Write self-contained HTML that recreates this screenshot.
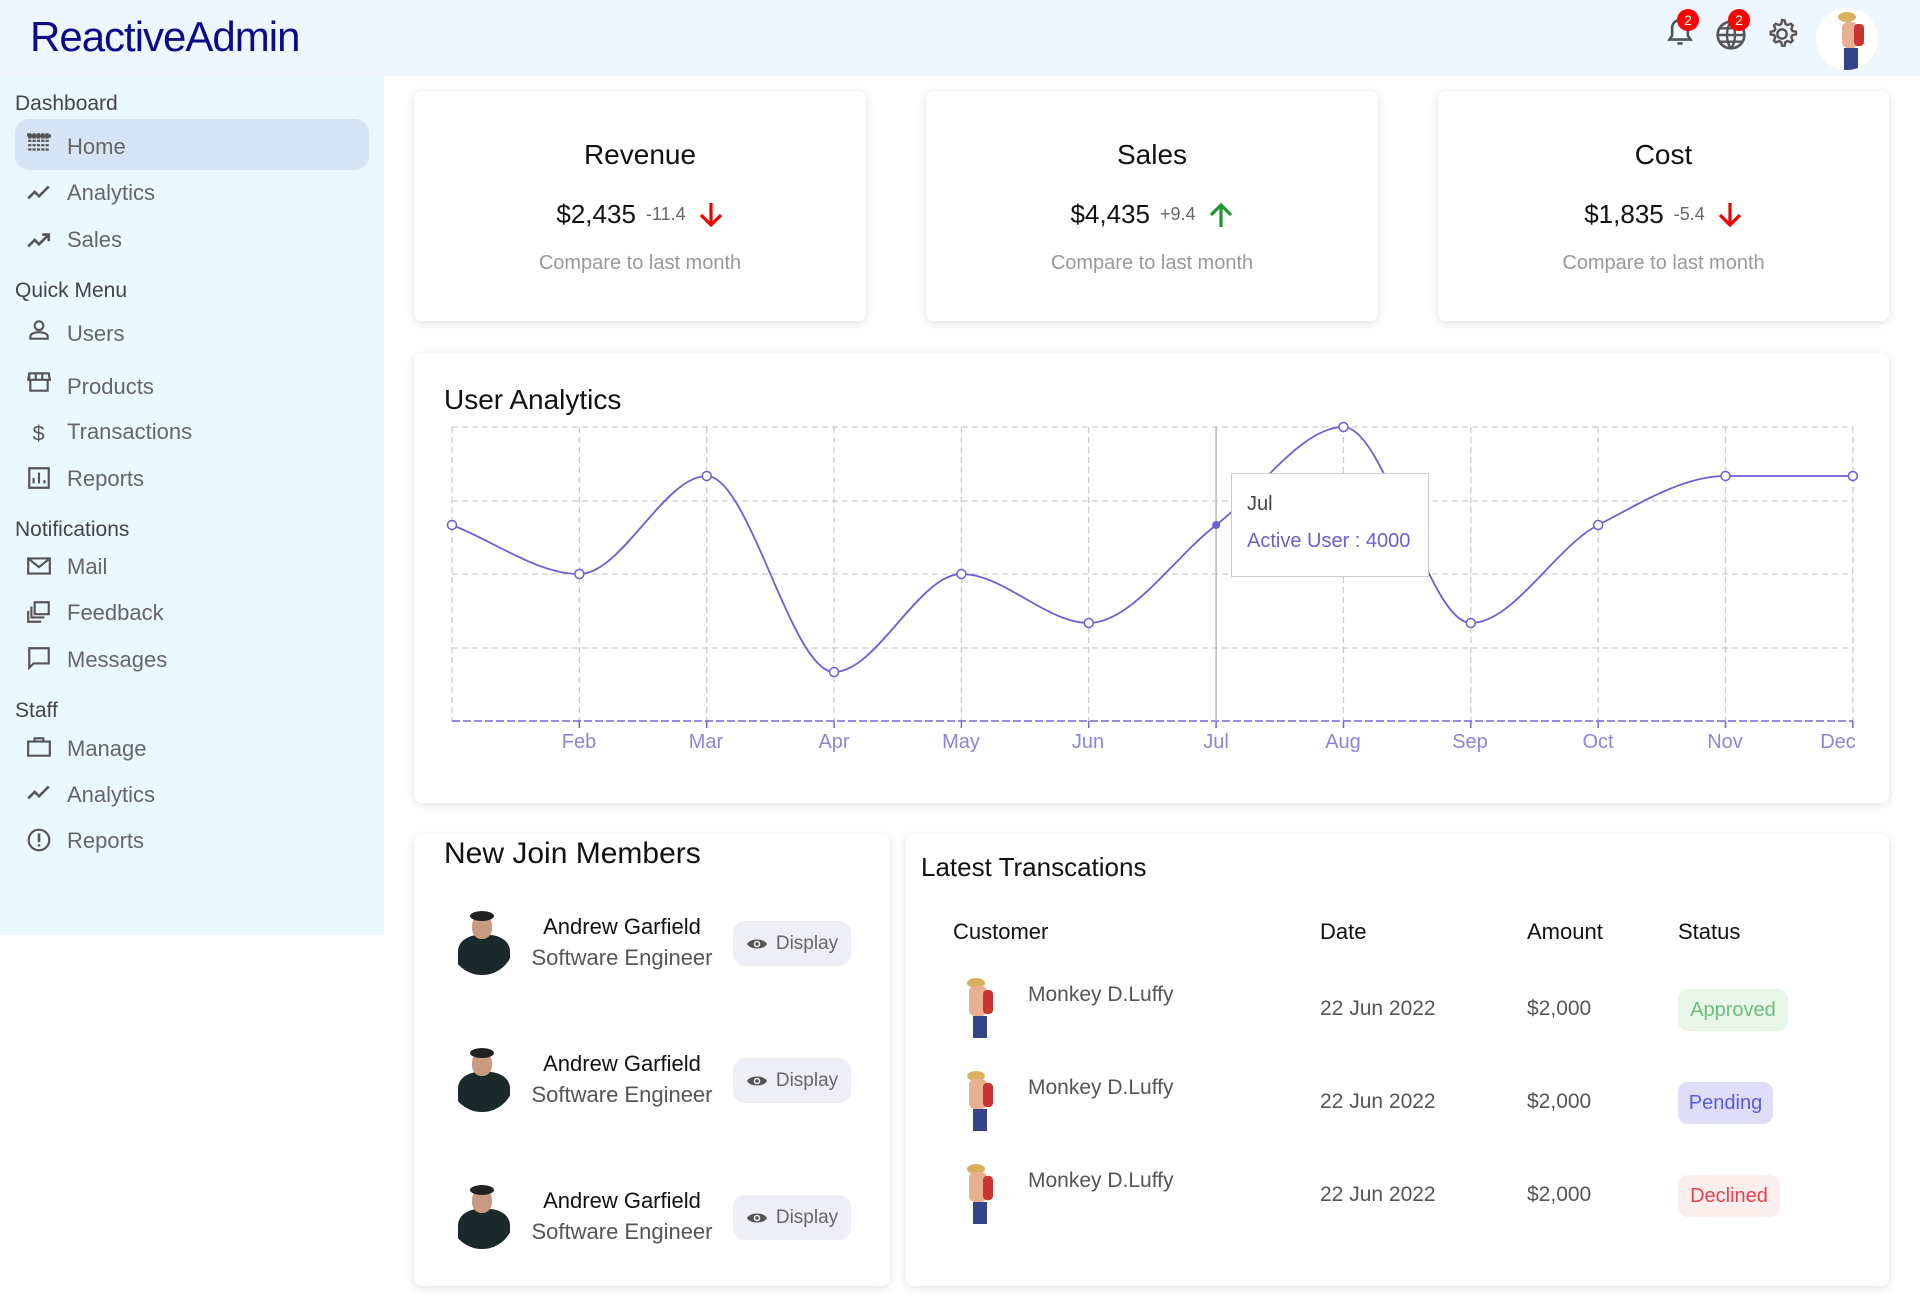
<!DOCTYPE html>
<html><head><meta charset="utf-8"><style>
*{margin:0;padding:0;box-sizing:border-box}
body{width:1920px;height:1315px;background:#fff;font-family:"Liberation Sans",sans-serif;position:relative;overflow:hidden;color:#222}
.a{position:absolute}
.hdr{left:0;top:0;width:1920px;height:76px;background:#eef6ff}
.logo{left:30px;top:13px;font-size:42px;color:#0a0a8a;letter-spacing:-1px}
.side{left:0;top:76px;width:384px;height:859px;background:#eaf8ff}
.sh{left:15px;font-size:21px;color:#444;transform:translateY(-50%)}
.si{left:67px;font-size:22px;color:#666;transform:translateY(-50%)}
.ic{left:26px;width:26px;height:26px;transform:translateY(-50%)}
.card{background:#fff;box-shadow:0 2px 10px rgba(0,0,0,.12);border-radius:8px}
.ct{width:100%;text-align:center;font-size:28px;color:#111}
.cv{width:100%;text-align:center;font-size:26px;color:#111;display:flex;justify-content:center;align-items:center}
.cv small{font-size:18px;color:#666;margin:0 12px 0 10px}
.cc{width:100%;text-align:center;font-size:20px;color:#999}
.ax{font-size:20px;color:#8a86dc;transform:translateX(-50%)}
.nm{font-size:22px;color:#111;text-align:center;width:200px}
.jb{font-size:22px;color:#555;text-align:center;width:200px}
.btn{width:118px;height:45px;background:#eeeef7;border-radius:12px;font-size:19px;color:#666;display:flex;align-items:center;justify-content:center;gap:8px}
.th{font-size:22px;color:#111}
.td{font-size:21px;color:#555}
.bd{height:42px;border-radius:10px;font-size:20px;display:flex;align-items:center;justify-content:center}
</style></head><body>
<div class="a hdr"></div>
<div class="a logo">ReactiveAdmin</div>
<svg class="a" style="left:1664px;top:16px" width="32" height="34" viewBox="0 0 24 26"><path d="M12 3a6 6 0 0 0-6 6v6l-2 3h16l-2-3V9a6 6 0 0 0-6-6z" fill="none" stroke="#555" stroke-width="2"/><path d="M10 21h4" stroke="#555" stroke-width="2"/></svg>
<div class="a" style="left:1677px;top:9px;width:22px;height:22px;border-radius:50%;background:#f00;color:#fff;font-size:14px;text-align:center;line-height:22px">2</div>
<svg class="a" style="left:1715px;top:19px" width="32" height="32" viewBox="0 0 24 24"><circle cx="12" cy="12" r="10" fill="none" stroke="#555" stroke-width="2"/><path d="M2 12h20M12 2c-4 5-4 15 0 20M12 2c4 5 4 15 0 20M4 7h16M4 17h16" fill="none" stroke="#555" stroke-width="1.8"/></svg>
<div class="a" style="left:1728px;top:9px;width:22px;height:22px;border-radius:50%;background:#f00;color:#fff;font-size:14px;text-align:center;line-height:22px">2</div>
<svg class="a" style="left:1766px;top:18px" width="32" height="32" viewBox="0 0 24 24"><path d="M12 1.5l2 .3.5 2.6 1.6.9 2.5-1 1.4 1.4-1 2.5.9 1.6 2.6.5v2l-2.6.5-.9 1.6 1 2.5-1.4 1.4-2.5-1-1.6.9-.5 2.6h-2l-.5-2.6-1.6-.9-2.5 1-1.4-1.4 1-2.5-.9-1.6-2.6-.5v-2l2.6-.5.9-1.6-1-2.5 1.4-1.4 2.5 1 1.6-.9.5-2.6z" fill="none" stroke="#555" stroke-width="1.8"/><circle cx="12" cy="12" r="3.5" fill="none" stroke="#555" stroke-width="1.8"/></svg>
<div class="a" style="left:1816px;top:8px;width:62px;height:62px;border-radius:50%;background:#fff;overflow:hidden">
<div class="a" style="left:22px;top:4px;width:18px;height:10px;background:#d8b060;border-radius:50%"></div>
<div class="a" style="left:26px;top:14px;width:16px;height:26px;background:#e8b090;border-radius:6px"></div>
<div class="a" style="left:38px;top:16px;width:10px;height:22px;background:#c33;border-radius:4px"></div>
<div class="a" style="left:28px;top:40px;width:14px;height:22px;background:#334488"></div>
</div>

<div class="a side"></div>
<div class="a" style="left:15px;top:119px;width:354px;height:51px;background:#d5e5f5;border-radius:14px"></div>
<div class="a sh" style="top:104px">Dashboard</div>
<div class="a sh" style="top:291px">Quick Menu</div>
<div class="a sh" style="top:530px">Notifications</div>
<div class="a sh" style="top:711px">Staff</div>
<div class="a si" style="top:147px">Home</div>
<div class="a si" style="top:193px">Analytics</div>
<div class="a si" style="top:240px">Sales</div>
<div class="a si" style="top:334px">Users</div>
<div class="a si" style="top:387px">Products</div>
<div class="a si" style="top:432px">Transactions</div>
<div class="a si" style="top:479px">Reports</div>
<div class="a si" style="top:567px">Mail</div>
<div class="a si" style="top:613px">Feedback</div>
<div class="a si" style="top:660px">Messages</div>
<div class="a si" style="top:749px">Manage</div>
<div class="a si" style="top:795px">Analytics</div>
<div class="a si" style="top:841px">Reports</div>
<svg class="a ic" style="top:143px" viewBox="0 0 24 24"><path d="M2 4h20v3H2zM2 10h20M2 14h20M2 18h20" stroke="#555" stroke-width="2" stroke-dasharray="3 1" fill="#555"/></svg>
<svg class="a ic" style="top:193px" viewBox="0 0 24 24"><path d="M2 17l6-6 4 4 9-9" fill="none" stroke="#555" stroke-width="2.4"/></svg>
<svg class="a ic" style="top:240px" viewBox="0 0 24 24"><path d="M2 18l6-6 4 4 8-8M15 7h6v6" fill="none" stroke="#555" stroke-width="2.4"/></svg>
<svg class="a ic" style="top:330px" viewBox="0 0 24 24"><circle cx="12" cy="8" r="4" fill="none" stroke="#555" stroke-width="2"/><path d="M4 20v-2c0-3 5-4 8-4s8 1 8 4v2z" fill="none" stroke="#555" stroke-width="2"/></svg>
<svg class="a ic" style="top:382px" viewBox="0 0 24 24"><path d="M3 4h18l1 6H2zM4 10v10h16V10M3 4v6M9 4v6M15 4v6" fill="none" stroke="#555" stroke-width="2"/></svg>
<svg class="a ic" style="top:432px" viewBox="0 0 24 24"><text x="6" y="20" font-size="20" fill="#555" font-family="Liberation Sans">$</text></svg>
<svg class="a ic" style="top:478px" viewBox="0 0 24 24"><path d="M3 3h18v18H3zM7 17v-5M12 17V7M17 17v-3" fill="none" stroke="#555" stroke-width="2"/></svg>
<svg class="a ic" style="top:566px" viewBox="0 0 24 24"><path d="M2 5h20v14H2zM2 5l10 8 10-8" fill="none" stroke="#555" stroke-width="2"/></svg>
<svg class="a ic" style="top:612px" viewBox="0 0 24 24"><path d="M8 3h13v11H8zM5 7v10h12M2 11v10h12" fill="none" stroke="#555" stroke-width="2"/></svg>
<svg class="a ic" style="top:658px" viewBox="0 0 24 24"><path d="M3 3h18v14H7l-4 4z" fill="none" stroke="#555" stroke-width="2"/></svg>
<svg class="a ic" style="top:747px" viewBox="0 0 24 24"><path d="M2 7h20v13H2zM8 7V4h8v3" fill="none" stroke="#555" stroke-width="2"/></svg>
<svg class="a ic" style="top:793px" viewBox="0 0 24 24"><path d="M2 17l6-6 4 4 9-9" fill="none" stroke="#555" stroke-width="2.4"/></svg>
<svg class="a ic" style="top:840px" viewBox="0 0 24 24"><circle cx="12" cy="12" r="9.5" fill="none" stroke="#555" stroke-width="2"/><path d="M12 6v8M12 16v2" stroke="#555" stroke-width="2.4"/></svg>

<div class="a card" style="left:414px;top:91px;width:452px;height:230px">
<div class="a ct" style="top:48px">Revenue</div>
<div class="a cv" style="top:108px">$2,435<small>-11.4</small><svg width="26" height="28" viewBox="0 0 26 28"><path d="M13 2v22M3 14l10 10 10-10" fill="none" stroke="#e00" stroke-width="3.2"/></svg></div>
<div class="a cc" style="top:161px">Compare to last month</div></div>
<div class="a card" style="left:926px;top:91px;width:452px;height:230px">
<div class="a ct" style="top:48px">Sales</div>
<div class="a cv" style="top:108px">$4,435<small>+9.4</small><svg width="26" height="28" viewBox="0 0 26 28"><path d="M13 26V4M3 14L13 4l10 10" fill="none" stroke="#1a9a2a" stroke-width="3.2"/></svg></div>
<div class="a cc" style="top:161px">Compare to last month</div></div>
<div class="a card" style="left:1438px;top:91px;width:451px;height:230px">
<div class="a ct" style="top:48px">Cost</div>
<div class="a cv" style="top:108px">$1,835<small>-5.4</small><svg width="26" height="28" viewBox="0 0 26 28"><path d="M13 2v22M3 14l10 10 10-10" fill="none" stroke="#e00" stroke-width="3.2"/></svg></div>
<div class="a cc" style="top:161px">Compare to last month</div></div>

<div class="a card" style="left:414px;top:353px;width:1475px;height:450px"></div>
<div class="a" style="left:444px;top:384px;font-size:28px;color:#111">User Analytics</div>
<svg class="a" style="left:0;top:0" width="1920" height="800">
<g stroke="#ccc" stroke-dasharray="6 4" stroke-width="1.3" fill="none">
<path d="M452 427H1853M452 501H1853M452 574H1853M452 648H1853"/>
<path d="M452 427V721M579.35 427V721M706.7 427V721M834.05 427V721M961.4 427V721M1088.75 427V721M1343.45 427V721M1470.8 427V721M1598.15 427V721M1725.5 427V721M1852.85 427V721"/>
</g>
<path d="M452 721H1853" stroke="#7068d8" stroke-width="1.5" stroke-dasharray="8 3"/>
<path d="M579.35 721v7M706.7 721v7M834.05 721v7M961.4 721v7M1088.75 721v7M1216.1 721v7M1343.45 721v7M1470.8 721v7M1598.15 721v7M1725.5 721v7M1852.85 721v7" stroke="#7068d8" stroke-width="1.5"/>
<path d="M1216.1 427V721" stroke="#bbb" stroke-width="1.5"/>
<path d="M452 525C494.45 541.3 536.9 574 579.35 574C621.8 574 664.25 476 706.7 476C749.15 476 791.6 672 834.05 672C876.5 672 918.95 574 961.4 574C1003.850 574 1046.3 623 1088.75 623C1131.2 623 1173.65 557.7 1216.1 525C1258.55 492.3 1301 427 1343.45 427C1385.9 427 1428.35 623 1470.8 623C1513.25 623 1555.7 546.8 1598.15 525C1640.6 503.2 1683.05 476 1725.5 476L1852.85 476" fill="none" stroke="#6a5fd6" stroke-width="1.8"/>
<g fill="#fff" stroke="#6a5fd6" stroke-width="1.5">
<circle cx="452" cy="525" r="4.5"/><circle cx="579.35" cy="574" r="4.5"/><circle cx="706.7" cy="476" r="4.5"/><circle cx="834.05" cy="672" r="4.5"/><circle cx="961.4" cy="574" r="4.5"/><circle cx="1088.75" cy="623" r="4.5"/><circle cx="1343.45" cy="427" r="4.5"/><circle cx="1470.8" cy="623" r="4.5"/><circle cx="1598.15" cy="525" r="4.5"/><circle cx="1725.5" cy="476" r="4.5"/><circle cx="1852.85" cy="476" r="4.5"/>
</g>
<circle cx="1216.1" cy="525" r="4" fill="#6a5fd6"/>
</svg>
<div class="a" style="left:1231px;top:473px;width:198px;height:104px;background:#fff;border:1px solid #ccc"></div>
<div class="a" style="left:1247px;top:493px;font-size:20px;color:#444">Jul</div>
<div class="a" style="left:1247px;top:530px;font-size:20px;color:#6a5fd6">Active User : 4000</div>
<div class="a ax" style="left:579px;top:731px">Feb</div>
<div class="a ax" style="left:706px;top:731px">Mar</div>
<div class="a ax" style="left:834px;top:731px">Apr</div>
<div class="a ax" style="left:961px;top:731px">May</div>
<div class="a ax" style="left:1088px;top:731px">Jun</div>
<div class="a ax" style="left:1216px;top:731px">Jul</div>
<div class="a ax" style="left:1343px;top:731px">Aug</div>
<div class="a ax" style="left:1470px;top:731px">Sep</div>
<div class="a ax" style="left:1598px;top:731px">Oct</div>
<div class="a ax" style="left:1725px;top:731px">Nov</div>
<div class="a ax" style="left:1838px;top:731px">Dec</div>

<div class="a card" style="left:414px;top:834px;width:476px;height:452px"></div>
<div class="a" style="left:444px;top:837px;font-size:30px;color:#111">New Join Members</div>
<div class="a" style="left:450px;top:911px;width:64px;height:64px;border-radius:50%;overflow:hidden;background:#fff"><div class="a" style="left:8px;top:24px;width:52px;height:40px;background:#1a2a2a;border-radius:40% 40% 0 0"></div><div class="a" style="left:22px;top:4px;width:20px;height:24px;background:#c89a80;border-radius:45%"></div><div class="a" style="left:20px;top:0;width:24px;height:10px;background:#222;border-radius:50%"></div></div>
<div class="a nm" style="left:522px;top:914px">Andrew Garfield</div>
<div class="a jb" style="left:522px;top:945px">Software Engineer</div>
<div class="a btn" style="left:733px;top:921px"><svg width="22" height="14" viewBox="0 0 22 14"><path d="M1 7C4 1 18 1 21 7C18 13 4 13 1 7z" fill="#555"/><circle cx="11" cy="7" r="3.3" fill="#eee"/><circle cx="11" cy="7" r="1.8" fill="#555"/></svg>Display</div>

<div class="a" style="left:450px;top:1048px;width:64px;height:64px;border-radius:50%;overflow:hidden;background:#fff"><div class="a" style="left:8px;top:24px;width:52px;height:40px;background:#1a2a2a;border-radius:40% 40% 0 0"></div><div class="a" style="left:22px;top:4px;width:20px;height:24px;background:#c89a80;border-radius:45%"></div><div class="a" style="left:20px;top:0;width:24px;height:10px;background:#222;border-radius:50%"></div></div>
<div class="a nm" style="left:522px;top:1051px">Andrew Garfield</div>
<div class="a jb" style="left:522px;top:1082px">Software Engineer</div>
<div class="a btn" style="left:733px;top:1058px"><svg width="22" height="14" viewBox="0 0 22 14"><path d="M1 7C4 1 18 1 21 7C18 13 4 13 1 7z" fill="#555"/><circle cx="11" cy="7" r="3.3" fill="#eee"/><circle cx="11" cy="7" r="1.8" fill="#555"/></svg>Display</div>

<div class="a" style="left:450px;top:1185px;width:64px;height:64px;border-radius:50%;overflow:hidden;background:#fff"><div class="a" style="left:8px;top:24px;width:52px;height:40px;background:#1a2a2a;border-radius:40% 40% 0 0"></div><div class="a" style="left:22px;top:4px;width:20px;height:24px;background:#c89a80;border-radius:45%"></div><div class="a" style="left:20px;top:0;width:24px;height:10px;background:#222;border-radius:50%"></div></div>
<div class="a nm" style="left:522px;top:1188px">Andrew Garfield</div>
<div class="a jb" style="left:522px;top:1219px">Software Engineer</div>
<div class="a btn" style="left:733px;top:1195px"><svg width="22" height="14" viewBox="0 0 22 14"><path d="M1 7C4 1 18 1 21 7C18 13 4 13 1 7z" fill="#555"/><circle cx="11" cy="7" r="3.3" fill="#eee"/><circle cx="11" cy="7" r="1.8" fill="#555"/></svg>Display</div>

<div class="a card" style="left:906px;top:834px;width:983px;height:452px"></div>
<div class="a" style="left:921px;top:852px;font-size:26px;color:#111">Latest Transcations</div>
<div class="a th" style="left:953px;top:919px">Customer</div>
<div class="a th" style="left:1320px;top:919px">Date</div>
<div class="a th" style="left:1527px;top:919px">Amount</div>
<div class="a th" style="left:1678px;top:919px">Status</div>

<div class="a" style="left:953px;top:978px;width:62px;height:62px"><div class="a" style="left:14px;top:0;width:18px;height:10px;background:#d8b060;border-radius:50%"></div><div class="a" style="left:16px;top:8px;width:18px;height:30px;background:#e8b090;border-radius:6px"></div><div class="a" style="left:30px;top:12px;width:10px;height:24px;background:#c33;border-radius:4px"></div><div class="a" style="left:20px;top:38px;width:14px;height:22px;background:#334488"></div></div>
<div class="a td" style="left:1028px;top:983px">Monkey D.Luffy</div>
<div class="a td" style="left:1320px;top:997px">22 Jun 2022</div>
<div class="a td" style="left:1527px;top:997px">$2,000</div>
<div class="a bd" style="left:1678px;top:989px;width:110px;background:#e8f6ea;color:#6cbf7a">Approved</div>

<div class="a" style="left:953px;top:1071px;width:62px;height:62px"><div class="a" style="left:14px;top:0;width:18px;height:10px;background:#d8b060;border-radius:50%"></div><div class="a" style="left:16px;top:8px;width:18px;height:30px;background:#e8b090;border-radius:6px"></div><div class="a" style="left:30px;top:12px;width:10px;height:24px;background:#c33;border-radius:4px"></div><div class="a" style="left:20px;top:38px;width:14px;height:22px;background:#334488"></div></div>
<div class="a td" style="left:1028px;top:1076px">Monkey D.Luffy</div>
<div class="a td" style="left:1320px;top:1090px">22 Jun 2022</div>
<div class="a td" style="left:1527px;top:1090px">$2,000</div>
<div class="a bd" style="left:1678px;top:1082px;width:95px;background:#dedef8;color:#5a5ae0">Pending</div>

<div class="a" style="left:953px;top:1164px;width:62px;height:62px"><div class="a" style="left:14px;top:0;width:18px;height:10px;background:#d8b060;border-radius:50%"></div><div class="a" style="left:16px;top:8px;width:18px;height:30px;background:#e8b090;border-radius:6px"></div><div class="a" style="left:30px;top:12px;width:10px;height:24px;background:#c33;border-radius:4px"></div><div class="a" style="left:20px;top:38px;width:14px;height:22px;background:#334488"></div></div>
<div class="a td" style="left:1028px;top:1169px">Monkey D.Luffy</div>
<div class="a td" style="left:1320px;top:1183px">22 Jun 2022</div>
<div class="a td" style="left:1527px;top:1183px">$2,000</div>
<div class="a bd" style="left:1678px;top:1175px;width:102px;background:#fdeeee;color:#e84050">Declined</div>
</body></html>
